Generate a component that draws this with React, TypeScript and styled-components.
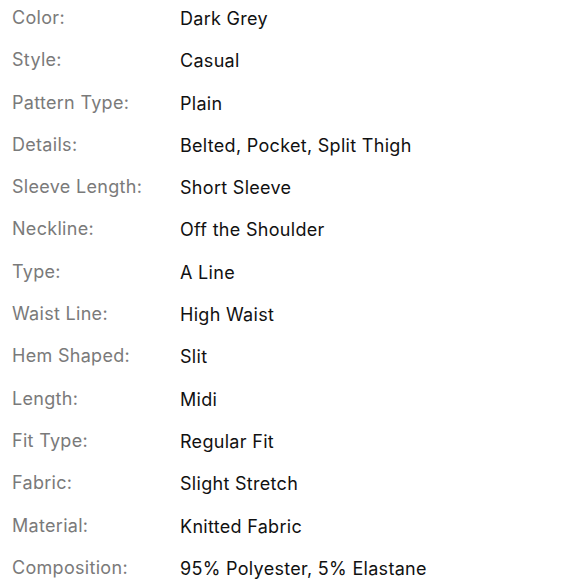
import React from "react";
import styled, { createGlobalStyle } from "styled-components";

const GlobalStyle = createGlobalStyle`
  body {
    margin: 0;
    background: #ffffff;
    font-family: Inter, "Noto Sans", "Liberation Sans", sans-serif;
  }
`;

const Specs = styled.dl`
  display: grid;
  grid-template-columns: 168px 1fr;
  grid-auto-rows: 42.3px;
  margin: 0;
  padding: 1px 0 0 12px;
`;

const Label = styled.dt`
  margin: 0;
  padding-top: 6px;
  font-size: 18px;
  line-height: 22px;
  letter-spacing: 0.3px;
  color: #7a7a7a;
`;

const Value = styled.dd`
  margin: 0;
  padding-top: 7px;
  font-size: 18px;
  line-height: 22px;
  letter-spacing: 0.3px;
  color: #111111;
`;

const specs: [string, string][] = [
  ["Color", "Dark Grey"],
  ["Style", "Casual"],
  ["Pattern Type", "Plain"],
  ["Details", "Belted, Pocket, Split Thigh"],
  ["Sleeve Length", "Short Sleeve"],
  ["Neckline", "Off the Shoulder"],
  ["Type", "A Line"],
  ["Waist Line", "High Waist"],
  ["Hem Shaped", "Slit"],
  ["Length", "Midi"],
  ["Fit Type", "Regular Fit"],
  ["Fabric", "Slight Stretch"],
  ["Material", "Knitted Fabric"],
  ["Composition", "95% Polyester, 5% Elastane"],
];

function App() {
  return (
    <>
      <GlobalStyle />
      <Specs>
        {specs.map(([label, value]) => (
          <React.Fragment key={label}>
            <Label>{label}:</Label>
            <Value>{value}</Value>
          </React.Fragment>
        ))}
      </Specs>
    </>
  );
}

export default App;
